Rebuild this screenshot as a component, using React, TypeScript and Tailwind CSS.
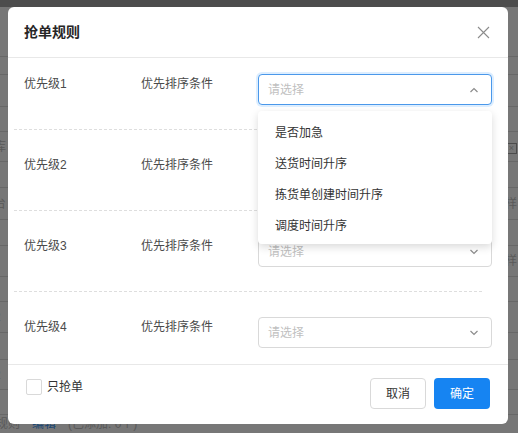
const FONT = { fontFamily: '"Liberation Sans", "Noto Sans CJK SC", sans-serif' };

const OPTIONS = ["是否加急", "送货时间升序", "拣货单创建时间升序", "调度时间升序"];

// background table row heights (px) behind the mask
const BG_ROWS = [50, 18, 32, 25, 30, 26, 32, 26, 31, 25, 31, 27, 30, 25];

function Chevron({ up }: { up?: boolean }) {
  return (
    <svg width="10" height="6" viewBox="0 0 10 6" className="text-[#8c8c8c]">
      <polyline
        points={up ? "1.5,5 5,1.5 8.5,5" : "1.5,1 5,4.5 8.5,1"}
        fill="none"
        stroke="currentColor"
        strokeWidth="1.2"
      />
    </svg>
  );
}

function SelectBox({ open }: { open?: boolean }) {
  return (
    <div
      className={`flex-1 h-[31px] rounded-[4px] border bg-white flex items-center justify-between pl-[9px] pr-[12px] ${
        open ? "border-[#4a98ea] shadow-[0_0_0_2px_rgba(24,144,255,0.15)]" : "border-[#d9d9d9]"
      }`}
    >
      <span className="text-[12px] text-[#bfbfbf]">请选择</span>
      <Chevron up={open} />
    </div>
  );
}

function RuleRow({ n, first, last }: { n: number; first?: boolean; last?: boolean }) {
  return (
    <div className={`${first ? "pt-4" : "pt-[25px]"} ${last ? "pb-4" : "pb-6"} px-4`}>
      <div className="flex items-start">
        <div className="w-[117px] mt-[2px] text-[12px] leading-[16px] text-[#4a4a4a]">优先级{n}</div>
        <div className="w-[117px] mt-[2px] text-[12px] leading-[16px] text-[#4a4a4a]">优先排序条件</div>
        <SelectBox open={first} />
      </div>
    </div>
  );
}

export default function App() {
  return (
    <div className="relative w-[518px] h-[433px] overflow-hidden bg-[#eeeeee]" style={FONT}>
      {/* page behind the modal */}
      <div className="h-[7px] bg-[#9a9a9a]" />
      {BG_ROWS.map((h, i) => (
        <div
          key={i}
          style={{ height: h }}
          className="border-b border-[#d0d0d0] flex items-center justify-between text-[12px] text-[#b4b4b4]"
        >
          <span className="-ml-[6px]">
            {i === 4 ? "库" : i === 6 ? "台" : i === 10 || i === 12 ? "2" : ""}
          </span>
          <span className="mr-[1px]">
            {i === 4 ? (
              <span className="inline-block w-[11px] h-[11px] border border-[#999] text-[9px] leading-[9px] text-center">×</span>
            ) : i === 6 || i === 8 ? (
              "样"
            ) : (
              ""
            )}
          </span>
        </div>
      ))}
      <div className="flex gap-3 text-[12px] text-[#b4b4b4] -ml-[4px]">
        <span>规则</span>
        <span className="text-[#3a8ee6]">编辑</span>
        <span>(已添加: 0个)</span>
      </div>

      {/* mask */}
      <div className="absolute inset-0 bg-black/50" />

      {/* modal */}
      <div className="absolute left-2 top-[7px] w-[500px] bg-white rounded-[6px]">
        <div className="h-[51px] px-4 flex items-center justify-between border-b border-[#e8e8e8]">
          <span className="text-[14px] font-bold text-[#262626]">抢单规则</span>
          <svg width="13" height="13" viewBox="0 0 13 13" className="mr-[2px] text-[#8c8c8c]">
            <path d="M1 1L12 12M12 1L1 12" stroke="currentColor" strokeWidth="1.1" />
          </svg>
        </div>

        <div className="relative">
          <RuleRow n={1} first />
          <div className="ml-[6px] mr-[26px] border-t border-dashed border-[#dedede]" />
          <RuleRow n={2} />
          <div className="ml-[6px] mr-[26px] border-t border-dashed border-[#dedede]" />
          <RuleRow n={3} />
          <div className="ml-[6px] mr-[26px] border-t border-dashed border-[#dedede]" />
          <RuleRow n={4} last />

          {/* dropdown of the open select */}
          <div className="absolute left-[250px] top-[53px] w-[234px] pt-[6px] pb-[3px] bg-white rounded-[4px] shadow-[0_3px_8px_rgba(0,0,0,0.15)]">
            {OPTIONS.map((o) => (
              <div key={o} className="h-[31px] flex items-center pl-[17px] text-[12px] text-[#333]">
                {o}
              </div>
            ))}
          </div>
        </div>

        <div className="border-t border-[#e8e8e8] h-[60px] pl-[18px] pr-[18px] pt-[13px] flex items-start justify-between">
          <label className="flex items-center gap-[5px]">
            <span className="w-[16px] h-[16px] rounded-[2px] border border-[#d9d9d9] bg-white" />
            <span className="text-[12px] text-[#333]">只抢单</span>
          </label>
          <div className="flex gap-2">
            <button className="w-[56px] h-[31px] rounded-[4px] border border-[#d9d9d9] bg-white text-[12px] text-[#333]">
              取消
            </button>
            <button className="w-[56px] h-[31px] rounded-[4px] bg-[#1684f2] text-[12px] text-white">
              确定
            </button>
          </div>
        </div>
      </div>
    </div>
  );
}
